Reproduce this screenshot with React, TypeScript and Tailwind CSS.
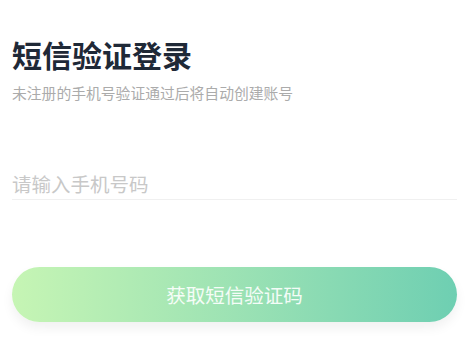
export default function App() {
  return (
    <div
      className="w-[465px] h-[339px] bg-white overflow-hidden pl-3 pr-2"
      style={{ fontFamily: '"Noto Sans CJK SC", "Noto Sans", sans-serif' }}
    >
      <div className="pt-[38px] text-[30px] leading-[32px] font-bold text-[#1f2937]">短信验证登录</div>
      <div className="mt-[14px] text-[14.8px] leading-[18px] text-[#ababab]">未注册的手机号验证通过后将自动创建账号</div>
      <div className="mt-[70px] border-b border-[#f0f0f0] pb-[2px]">
        <input
          className="w-full text-[19.5px] leading-[24px] outline-none bg-transparent placeholder-[#c8c8c8] text-[#1f2937]"
          placeholder="请输入手机号码"
        />
      </div>
      <button className="mt-[67px] w-full h-[55px] rounded-full bg-gradient-to-r from-[#c6f5b4] to-[#6ecfb2] text-white/90 text-[19.5px] shadow-[0_6px_12px_rgba(0,0,0,0.06)]">
        获取短信验证码
      </button>
    </div>
  );
}
